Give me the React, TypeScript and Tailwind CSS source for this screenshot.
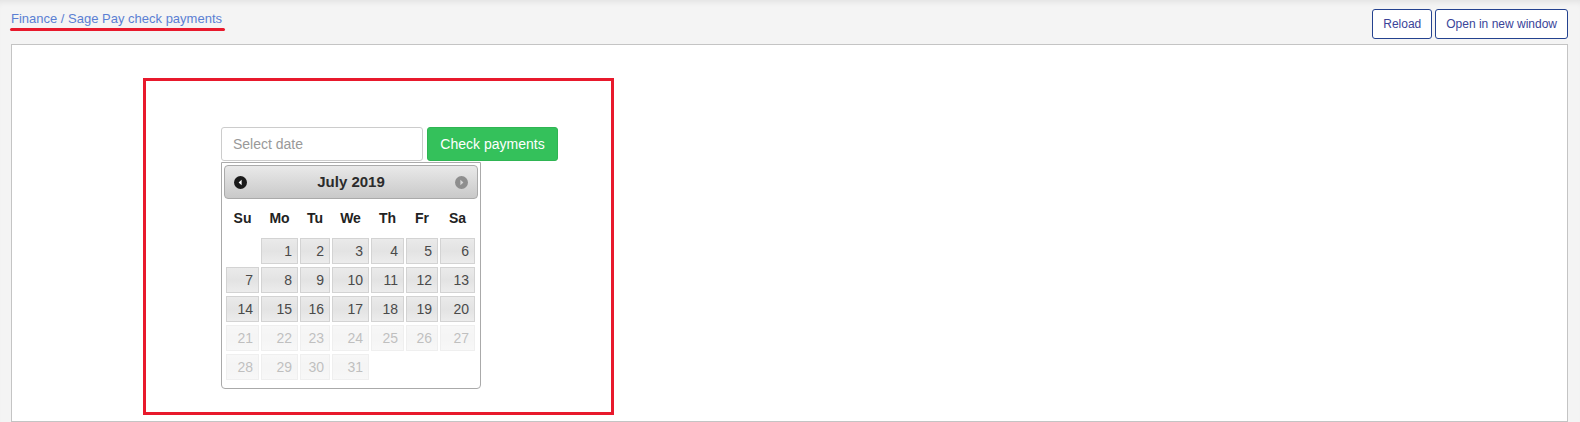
import React from 'react';

const colClass = 'grid grid-cols-[33px_37px_30px_37px_33px_32px_35px] gap-x-[2px]';

const dayNames = ['Su', 'Mo', 'Tu', 'We', 'Th', 'Fr', 'Sa'];

// July 2019 starts on a Monday; days after the 20th are disabled
const cells: (number | null)[] = [null, ...Array.from({ length: 31 }, (_, i) => i + 1)];

const PrevIcon = () => (
  <svg width="13" height="13" viewBox="0 0 13 13">
    <circle cx="6.5" cy="6.5" r="6.5" fill="#1a1a1a" />
    <path d="M7.6 3.8 L4.6 6.5 L7.6 9.2 Z" fill="#fff" />
  </svg>
);

const NextIcon = () => (
  <svg width="13" height="13" viewBox="0 0 13 13">
    <circle cx="6.5" cy="6.5" r="6.5" fill="#8e8e8e" />
    <path d="M5.4 3.8 L8.4 6.5 L5.4 9.2 Z" fill="#d6d6d6" />
  </svg>
);

const Calendar: React.FC = () => (
  <div className="mt-[1px] w-[260px] border border-[#aaaaaa] rounded-b-[4px] bg-white p-[2px] pb-[8px]">
    {/* Header */}
    <div className="h-[34px] flex items-center justify-between px-[9px] border border-[#aaaaaa] rounded-[4px] bg-gradient-to-b from-[#e9e9e9] to-[#c9c9c9]">
      <PrevIcon />
      <span className="text-[15px] font-bold text-[#2b2b2b]">July 2019</span>
      <NextIcon />
    </div>

    {/* Day names */}
    <div className={`${colClass} pl-[2px] h-[39px] items-center`}>
      {dayNames.map((d) => (
        <span key={d} className="text-center text-[14px] font-bold text-[#222]">
          {d}
        </span>
      ))}
    </div>

    {/* Days */}
    <div className={`${colClass} gap-y-[3px] pl-[2px]`}>
      {cells.map((day, i) =>
        day === null ? (
          <span key={`e${i}`} />
        ) : (
          <span
            key={day}
            className={`h-[26px] flex items-center justify-end pr-[5px] text-[14px] text-[#4a4a4a] border border-[#d3d3d3] bg-gradient-to-b from-[#eaeaea] via-[#e3e3e3] to-[#ececec] ${
              day > 20 ? 'opacity-35' : ''
            }`}
          >
            {day}
          </span>
        )
      )}
    </div>
  </div>
);

export default function App() {
  return (
    <div
      className="h-[422px] overflow-hidden bg-[#f4f4f4] shadow-[inset_0_6px_6px_-4px_rgba(0,0,0,0.08)]"
      style={{ fontFamily: '"Liberation Sans", Arial, sans-serif' }}
    >
      {/* Top bar */}
      <div className="h-[44px] flex justify-between pl-[10px] pr-[12px]">
        <div className="pt-[11px]">
          <a className="block px-[1px] text-[13px] leading-[15px] text-[#5b7fd3]">Finance / Sage Pay check payments</a>
          <div className="mt-[2px] w-[215px] h-[3px] rounded-full bg-[#e8192c]" />
        </div>
        <div className="pt-[9px] flex gap-[3px]">
          <button className="h-[30px] px-[10px] text-[12px] text-[#3a4499] border border-[#24428f] rounded-[3px] bg-white">
            Reload
          </button>
          <button className="h-[30px] px-[10px] text-[12px] text-[#3a4499] border border-[#24428f] rounded-[3px] bg-white">
            Open in new window
          </button>
        </div>
      </div>

      {/* Frame panel */}
      <div className="ml-[11px] mr-[12px] h-[378px] border border-[#c4c4c4] bg-white pl-[131px] pt-[33px]">
        <div className="w-[471px] h-[337px] border-[3px] border-[#e8192c] pl-[75px] pt-[46px]">
          <div className="flex gap-[4px]">
            <input
              placeholder="Select date"
              className="w-[202px] h-[34px] px-[11px] text-[14px] text-[#555] placeholder:text-[#999] border border-[#cccccc] rounded-[3px] outline-none"
            />
            <button className="w-[131px] h-[34px] text-[14px] text-white bg-[#34c15b] border border-[#2fb553] rounded-[3px]">
              Check payments
            </button>
          </div>
          <Calendar />
        </div>
      </div>
    </div>
  );
}
